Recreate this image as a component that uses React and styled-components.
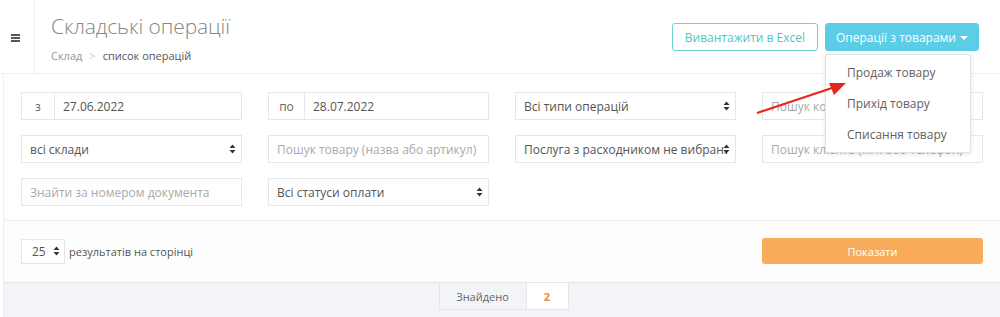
import React from "react";
import styled, { createGlobalStyle } from "styled-components";

const Global = createGlobalStyle`
  html, body { margin: 0; padding: 0; background: #fff; }
  body { font-family: "Open Sans", "Noto Sans", sans-serif; color: #676a6c; }
  * { box-sizing: border-box; }
`;

const Page = styled.div`
  position: relative;
  width: 1000px;
  height: 317px;
  overflow: hidden;
  background: #fff;
`;

const Header = styled.header`
  display: flex;
  height: 74px;
  border-bottom: 1px solid #eef0f3;
`;

const MenuCell = styled.div`
  width: 35px;
  border-right: 1px solid #eceef1;
  display: flex;
  align-items: center;
  justify-content: center;
  padding: 2px 4px 0 0;
`;

const TitleBlock = styled.div`
  flex: 1;
  padding: 12px 0 0 16px;
`;

const Title = styled.h1`
  margin: 0;
  font-size: 21px;
  font-weight: 300;
  color: #858585;
  line-height: 28px;
  letter-spacing: -0.1px;
`;

const Crumbs = styled.div`
  margin-top: 8px;
  font-size: 11px;
  color: #999;
  display: flex;
  gap: 7px;
`;

const CrumbSep = styled.span`
  color: #c8c8c8;
`;

const CrumbActive = styled.span`
  color: #555;
`;

const Actions = styled.div`
  display: flex;
  gap: 7px;
  padding: 23px 21px 0 0;
  align-items: flex-start;
`;

const Button = styled.button`
  height: 28px;
  padding: 0 ${(p) => (p.$primary ? "10px" : "12px")};
  border-radius: 3px;
  font-family: inherit;
  font-size: 12px;
  cursor: pointer;
  border: 1px solid ${(p) => (p.$primary ? "#5bcde6" : "#6fd3d6")};
  background: ${(p) => (p.$primary ? "#5bcde6" : "#fff")};
  color: ${(p) => (p.$primary ? "#fff" : "#4fc4c9")};
  display: flex;
  align-items: center;
  gap: 4px;
`;

const Caret = styled.span`
  width: 0;
  height: 0;
  border-left: 4px solid transparent;
  border-right: 4px solid transparent;
  border-top: 4px solid #fff;
  margin-top: 1px;
`;

const DropWrap = styled.div`
  position: relative;
`;

const Menu = styled.ul`
  position: absolute;
  top: 31px;
  left: 0;
  width: 146px;
  margin: 0;
  padding: 2px 0;
  list-style: none;
  background: #fff;
  border: 1px solid #e2e2e2;
  border-radius: 3px;
  box-shadow: 0 1px 4px rgba(0, 0, 0, 0.12);
  z-index: 5;
`;

const MenuItem = styled.li`
  padding: 0 0 0 21px;
  height: 31px;
  line-height: 31px;
  font-size: 12px;
  color: #5f5f5f;
`;

const Body = styled.div`
  margin-left: 3px;
  border-left: 1px solid #eef0f3;
`;

const Filters = styled.div`
  display: grid;
  grid-template-columns: repeat(4, 221px);
  column-gap: 26px;
  row-gap: 15px;
  padding: 18px 0 14px 17px;
  border-bottom: 1px solid #eceef1;
`;

const Field = styled.div`
  height: 28px;
  border: 1px solid #e6e7e9;
  display: flex;
  align-items: center;
  background: #fff;
  font-size: 12px;
  color: ${(p) => (p.$placeholder ? "#a9a9a9" : "#555")};
  padding: 0 8px;
  position: relative;
  white-space: nowrap;
  overflow: hidden;
`;

const Group = styled.div`
  height: 28px;
  display: flex;
  border: 1px solid #e6e7e9;
  font-size: 12px;
  color: #555;
`;

const Addon = styled.div`
  width: ${(p) => p.$w}px;
  border-right: 1px solid #e6e7e9;
  display: flex;
  align-items: center;
  justify-content: center;
  color: #666;
`;

const GroupInput = styled.div`
  flex: 1;
  display: flex;
  align-items: center;
  padding-left: 8px;
`;

const SelectText = styled.span`
  flex: 1;
  overflow: hidden;
`;

const Arrows = () => (
  <svg width="7" height="10" viewBox="0 0 7 10" style={{ flex: "none" }}>
    <path d="M3.5 0.5 L6.5 4 L0.5 4 Z M3.5 9.5 L6.5 6 L0.5 6 Z" fill="#333" />
  </svg>
);

const Hamburger = () => (
  <svg width="9" height="8" viewBox="0 0 9 8">
    <path d="M0 1h9M0 4h9M0 7h9" stroke="#222" strokeWidth="1.6" />
  </svg>
);

const SelectArrow = styled.span`
  position: absolute;
  right: 5px;
  top: 8px;
  display: flex;
`;

const Bottom = styled.div`
  display: grid;
  grid-template-columns: repeat(4, 221px);
  column-gap: 26px;
  padding: 17px 0 18px 17px;
  background: #fdfdfe;
  border-bottom: 1px solid #e4e7ec;
`;

const PerPage = styled.div`
  display: flex;
  align-items: center;
  gap: 4px;
  font-size: 11px;
  color: #555;
  white-space: nowrap;
`;

const SmallSelect = styled.div`
  width: 44px;
  height: 25px;
  border: 1px solid #e6e7e9;
  background: #fff;
  display: flex;
  align-items: center;
  justify-content: space-between;
  padding: 0 4px 0 10px;
  font-size: 12px;
  color: #555;
`;

const ShowButton = styled.button`
  grid-column: 4;
  height: 26px;
  border: none;
  border-radius: 3px;
  background: #f8ac59;
  color: #fff;
  font-family: inherit;
  font-size: 11px;
  cursor: pointer;
`;

const Footer = styled.div`
  background: #f3f4f8;
  height: 40px;
  display: flex;
  justify-content: center;
  padding-left: 3px;
`;

const Pager = styled.div`
  display: flex;
  height: 27px;
`;

const PagerCell = styled.div`
  width: ${(p) => p.$w}px;
  border: 1px solid #e4e6ea;
  border-top: none;
  border-left-width: ${(p) => (p.$first ? "1px" : "0")};
  background: ${(p) => (p.$active ? "#fff" : "#f3f4f8")};
  color: ${(p) => (p.$active ? "#f0894a" : "#666")};
  font-weight: ${(p) => (p.$active ? 700 : 400)};
  font-size: 11px;
  display: flex;
  align-items: center;
  justify-content: center;
`;

const ArrowOverlay = styled.svg`
  position: absolute;
  left: 750px;
  top: 76px;
  z-index: 10;
  pointer-events: none;
`;

function Select({ children }) {
  return (
    <Field>
      <SelectText>{children}</SelectText>
      <SelectArrow>
        <Arrows />
      </SelectArrow>
    </Field>
  );
}

export default function App() {
  return (
    <Page>
      <Global />
      <Header>
        <MenuCell>
          <Hamburger />
        </MenuCell>
        <TitleBlock>
          <Title>Складські операції</Title>
          <Crumbs>
            <span>Склад</span>
            <CrumbSep>&gt;</CrumbSep>
            <CrumbActive>список операцій</CrumbActive>
          </Crumbs>
        </TitleBlock>
        <Actions>
          <Button>Вивантажити в Excel</Button>
          <DropWrap>
            <Button $primary>
              Операції з товарами <Caret />
            </Button>
            <Menu>
              <MenuItem>Продаж товару</MenuItem>
              <MenuItem>Прихід товару</MenuItem>
              <MenuItem>Списання товару</MenuItem>
            </Menu>
          </DropWrap>
        </Actions>
      </Header>
      <Body>
        <Filters>
          <Group>
            <Addon $w={33}>з</Addon>
            <GroupInput>27.06.2022</GroupInput>
          </Group>
          <Group>
            <Addon $w={36}>по</Addon>
            <GroupInput>28.07.2022</GroupInput>
          </Group>
          <Select>Всі типи операцій</Select>
          <Field $placeholder>Пошук контрагента</Field>

          <Select>всі склади</Select>
          <Field $placeholder>Пошук товару (назва або артикул)</Field>
          <Select>Послуга з расходником не вибрана</Select>
          <Field $placeholder>Пошук клієнта (ім'я або телефон)</Field>

          <Field $placeholder>Знайти за номером документа</Field>
          <Select>Всі статуси оплати</Select>
        </Filters>
        <Bottom>
          <PerPage>
            <SmallSelect>
              25 <Arrows />
            </SmallSelect>
            результатів на сторінці
          </PerPage>
          <ShowButton>Показати</ShowButton>
        </Bottom>
        <Footer>
          <Pager>
            <PagerCell $w={88} $first>
              Знайдено
            </PagerCell>
            <PagerCell $w={42} $active>
              2
            </PagerCell>
          </Pager>
        </Footer>
      </Body>
      <ArrowOverlay width="110" height="45" viewBox="0 0 110 45">
        <line x1="7" y1="37" x2="82" y2="12" stroke="#e8251d" strokeWidth="2.2" />
        <path d="M96 7 L79 7 L84 19 Z" fill="#e8251d" />
      </ArrowOverlay>
    </Page>
  );
}
